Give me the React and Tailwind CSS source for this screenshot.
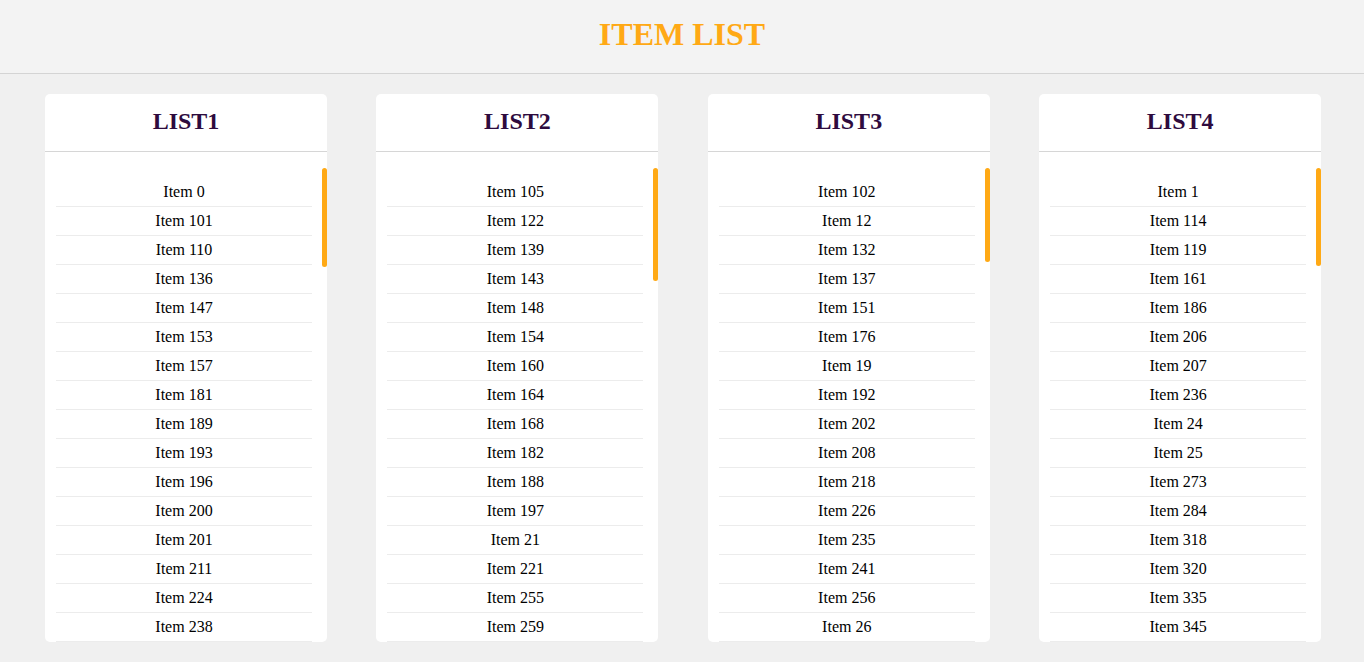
const serif = { fontFamily: '"Liberation Serif", "Times New Roman", serif' };

// fills out the rest of a list with numbers that sort after the last visible one
const tail = (last, count, seed) => {
  const out = [];
  let n = seed;
  let guard = 0;
  while (out.length < count && guard < 5000) {
    guard++;
    n = (n * 37 + 11) % 400;
    const label = `Item ${n}`;
    if (label > last && !out.includes(label)) out.push(label);
  }
  return out.sort();
};

const make = (visible, extra, seed) => {
  const items = visible.map((n) => `Item ${n}`);
  return [...items, ...tail(items[items.length - 1], extra, seed)];
};

const lists = [
  {
    title: 'LIST1',
    thumb: 99,
    items: make([0, 101, 110, 136, 147, 153, 157, 181, 189, 193, 196, 200, 201, 211, 224, 238], 61, 7),
  },
  {
    title: 'LIST2',
    thumb: 113,
    items: make([105, 122, 139, 143, 148, 154, 160, 164, 168, 182, 188, 197, 21, 221, 255, 259], 51, 13),
  },
  {
    title: 'LIST3',
    thumb: 94,
    items: make([102, 12, 132, 137, 151, 176, 19, 192, 202, 208, 218, 226, 235, 241, 256, 26], 65, 29),
  },
  {
    title: 'LIST4',
    thumb: 98,
    items: make([1, 114, 119, 161, 186, 206, 207, 236, 24, 25, 273, 284, 318, 320, 335, 345], 62, 41),
  },
];

const ListCard = ({ title, items, thumb }) => (
  <div className="w-[282px] h-[548px] bg-white rounded-[5px] flex flex-col overflow-hidden">
    {/* Card title */}
    <div className="h-[58px] pb-1 shrink-0 flex items-center justify-center border-b border-[#d6d6d6]">
      <h2 className="text-[24px] font-bold text-[#2e0b3e] leading-none">{title}</h2>
    </div>

    {/* Scrollable items */}
    <div className="relative mt-4 flex-1 min-h-0">
      <div className="h-full overflow-hidden">
        <ul className="pt-[10px] pl-[11px] pr-[15px]">
          {items.map((item) => (
            <li
              key={item}
              className="h-[29px] flex items-center justify-center border-b border-[#ececec] text-[16px] text-black"
            >
              {item}
            </li>
          ))}
        </ul>
      </div>
      {/* scrollbar thumb */}
      <div className="absolute top-0 right-0 w-[5px] rounded-full bg-[#ffa915]" style={{ height: thumb }} />
    </div>
  </div>
);

export default function App() {
  return (
    <div className="min-h-[662px] bg-[#f0f0f0]" style={serif}>
      <header className="h-[74px] pb-[6px] bg-[#f3f3f3] border-b border-[#d4d4d4] flex items-center justify-center">
        <h1 className="text-[32px] font-bold text-[#ffa915] leading-none">ITEM LIST</h1>
      </header>

      <main className="flex gap-[49.4px] pl-[45px] pt-5 pb-5">
        {lists.map((list) => (
          <ListCard key={list.title} title={list.title} items={list.items} thumb={list.thumb} />
        ))}
      </main>
    </div>
  );
}
